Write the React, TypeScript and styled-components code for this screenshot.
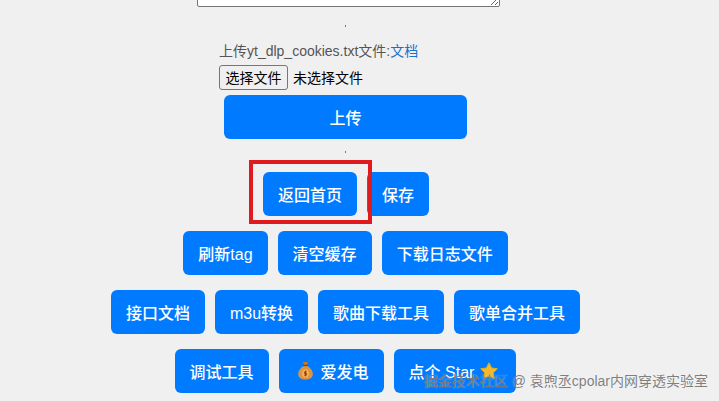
import React from 'react'
import styled, { createGlobalStyle } from 'styled-components'

const GlobalStyle = createGlobalStyle`
  html, body {
    margin: 0;
    padding: 0;
    height: 401px;
    overflow: hidden;
    background: #f0f0f0;
  }
  body {
    font-family: "Liberation Sans", "Noto Sans CJK SC", sans-serif;
  }
`;

const Page = styled.div`
  position: relative;
  width: 719px;
  height: 401px;
  overflow: hidden;
`;

const Content = styled.div`
  width: 691px;
  display: flex;
  flex-direction: column;
  align-items: center;
`;

const ConfigBox = styled.textarea`
  display: block;
  box-sizing: border-box;
  width: 303px;
  height: 60px;
  margin: -53px 0 0 6px;
  border: 1px solid #767676;
  border-radius: 2px;
  background: #ffffff;
`;

const Dot = styled.div<{ $top: number }>`
  width: 1px;
  height: 2px;
  margin-top: ${props => props.$top}px;
  background: #777777;
`;

const UploadForm = styled.div`
  width: 253px;
  margin-top: 14px;
`;

const UploadLabel = styled.div`
  height: 20px;
  line-height: 20px;
  font-size: 14px;
  color: #555555;
`;

const DocLink = styled.a`
  color: #1a6fd0;
  text-decoration: none;
`;

const FileRow = styled.div`
  display: flex;
  align-items: center;
  margin-top: 4px;
`;

const FileButton = styled.div`
  box-sizing: border-box;
  width: 69px;
  height: 25px;
  line-height: 24px;
  text-align: center;
  font-size: 14px;
  color: #000000;
  background: #efefef;
  border: 1px solid #767676;
  border-radius: 3px;
`;

const FileName = styled.span`
  margin: 0 0 2px 5px;
  font-size: 14px;
  color: #000000;
`;

const UploadButton = styled.button`
  display: block;
  width: 243px;
  height: 44px;
  margin: 5px 0 0 5px;
  padding: 0;
  border: 0;
  border-radius: 6px;
  background: #007bff;
  color: #ffffff;
  font-family: inherit;
  font-size: 16px;
  font-weight: 500;
`;

const ButtonRow = styled.div<{ $top: number }>`
  display: flex;
  justify-content: center;
  gap: 10px;
  margin-top: ${props => props.$top}px;
`;

const ActionButton = styled.button`
  display: flex;
  align-items: center;
  height: 44px;
  padding: 0 15px;
  border: 0;
  border-radius: 6px;
  background: #007bff;
  color: #ffffff;
  font-family: inherit;
  font-size: 16px;
  font-weight: 500;
  white-space: nowrap;
`;

const Marked = styled.div`
  position: relative;
  display: flex;
  margin-left: 1px;
`;

const RedFrame = styled.div`
  position: absolute;
  top: -12px;
  left: -14px;
  right: -15px;
  bottom: -8px;
  border: 4px solid #e01b1f;
  pointer-events: none;
`;

const Watermark = styled.div`
  position: absolute;
  right: 11px;
  bottom: 12px;
  font-size: 14px;
  line-height: 16px;
  color: rgba(115, 115, 115, 0.92);
  text-shadow: 0 0 1px rgba(255, 255, 255, 0.5);
  white-space: nowrap;
`;

const BagIcon = () => (
  <svg width="21" height="20" viewBox="0 0 21 20" style={{ margin: '0 5px 0 1px' }}>
    <path d="M8 1 L13 1 L12 4 L9 4 Z" fill="#c07a35" />
    <path d="M8.5 5 C5 7 3.2 10 3.2 13 C3.2 17 6.5 18.5 10.5 18.5 C14.5 18.5 17.8 17 17.8 13 C17.8 10 16 7 12.5 5 Z" fill="#e0933f" />
    <rect x="8.2" y="3.8" width="4.6" height="1.4" fill="#7a4a20" />
    <ellipse cx="10.5" cy="12.5" rx="3.4" ry="4" fill="#f2b655" />
    <path d="M10.5 9.6 V15.4 M12 10.9 H9.4 V12.5 H11.6 V14.1 H9" stroke="#a3341c" strokeWidth="0.9" fill="none" />
  </svg>
)

const StarIcon = () => (
  <svg width="20" height="18" viewBox="0 0 20 18" style={{ margin: '0 2px 0 5px' }}>
    <path
      d="M10 .8 L12.6 6 L18.3 6.8 L14.2 10.8 L15.2 16.6 L10 13.9 L4.8 16.6 L5.8 10.8 L1.7 6.8 L7.4 6 Z"
      fill="#f4b92e"
      stroke="#e6a91f"
      strokeWidth="1"
      strokeLinejoin="round"
    />
  </svg>
)

const App = () => {
  return (
    <Page>
      <GlobalStyle />
      <Content>
        <ConfigBox />
        <Dot $top={18} />
        <UploadForm>
          <UploadLabel>
            上传yt_dlp_cookies.txt文件:<DocLink href="#">文档</DocLink>
          </UploadLabel>
          <FileRow>
            <FileButton>选择文件</FileButton>
            <FileName>未选择文件</FileName>
          </FileRow>
          <UploadButton>上传</UploadButton>
        </UploadForm>
        <Dot $top={12} />
        <ButtonRow $top={19}>
          <Marked>
            <ActionButton>返回首页</ActionButton>
            <RedFrame />
          </Marked>
          <ActionButton>保存</ActionButton>
        </ButtonRow>
        <ButtonRow $top={15}>
          <ActionButton>刷新tag</ActionButton>
          <ActionButton>清空缓存</ActionButton>
          <ActionButton>下载日志文件</ActionButton>
        </ButtonRow>
        <ButtonRow $top={15}>
          <ActionButton>接口文档</ActionButton>
          <ActionButton>m3u转换</ActionButton>
          <ActionButton>歌曲下载工具</ActionButton>
          <ActionButton>歌单合并工具</ActionButton>
        </ButtonRow>
        <ButtonRow $top={15}>
          <ActionButton>调试工具</ActionButton>
          <ActionButton><BagIcon />爱发电</ActionButton>
          <ActionButton>点个 Star<StarIcon /></ActionButton>
        </ButtonRow>
      </Content>
      <Watermark>掘金技术社区 @ 袁煦丞cpolar内网穿透实验室</Watermark>
    </Page>
  );
}

export default App
